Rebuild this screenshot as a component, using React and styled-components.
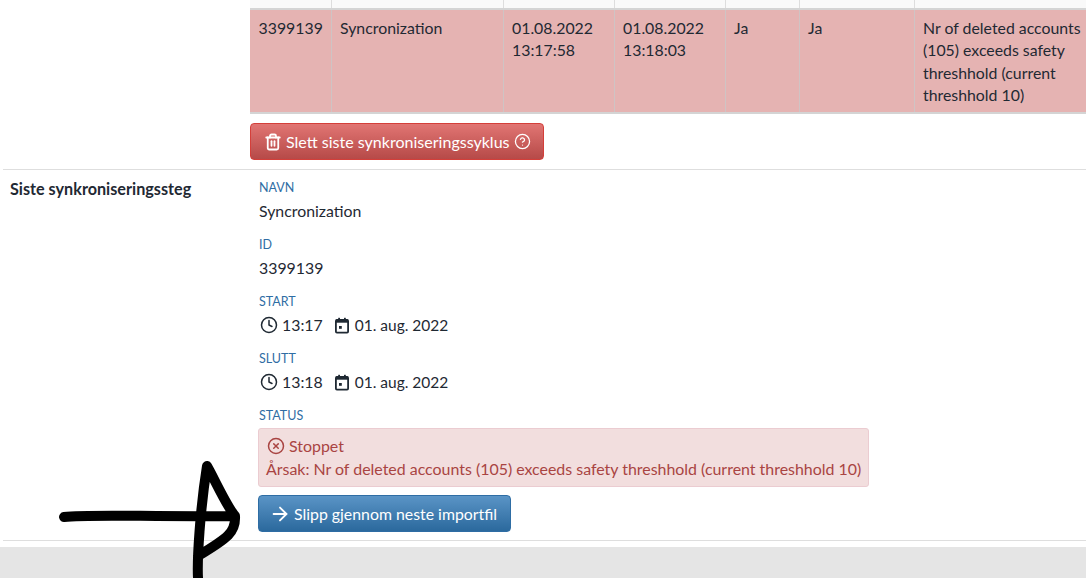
import React from "react";
import styled, { createGlobalStyle } from "styled-components";
import { Trash2, CircleHelp, Clock, CircleX, ArrowRight } from "lucide-react";

const GlobalStyle = createGlobalStyle`
  html, body {
    margin: 0;
    padding: 0;
    background: #fff;
  }
  body {
    font-family: Lato, "Open Sans", sans-serif;
    font-size: 15.85px;
    line-height: 22px;
    color: #1f2933;
    overflow: hidden;
  }
`;

const Page = styled.div`
  position: relative;
  width: 1086px;
  height: 578px;
  overflow: hidden;
  display: flex;
  flex-direction: column;
`;

const Main = styled.div`
  padding-left: 3px;
`;

const TopSection = styled.section`
  padding-left: 247px;
  height: 169px;
  box-sizing: border-box;
`;

const StepSection = styled.section`
  display: grid;
  grid-template-columns: 255px 1fr;
  border-top: 1px solid #dedede;
  border-bottom: 1px solid #dedede;
  height: 372px;
  box-sizing: border-box;
`;

const SectionTitle = styled.h3`
  margin: 8px 0 0 7px;
  font-size: 16.2px;
  line-height: 22px;
  font-weight: 700;
`;

const Table = styled.table`
  border-collapse: collapse;
  table-layout: fixed;
  width: 836px;
`;

const HeadCell = styled.th`
  height: 8px;
  padding: 0;
  background: #f9f9f9;
  border-right: 1px solid #dddddd;
  border-bottom: 2px solid #d4d4d4;
  &:last-child {
    border-right: 0;
  }
`;

const Cell = styled.td`
  height: 104px;
  box-sizing: border-box;
  padding: 7px 4px 5px 8.5px;
  line-height: 22.4px;
  vertical-align: top;
  background: #e5b3b2;
  border-right: 1px solid #cfc4c4;
  border-bottom: 2px solid #d4d4d4;
  &:last-child {
    border-right: 0;
  }
`;

const Button = styled.button`
  display: inline-flex;
  align-items: center;
  height: 37px;
  box-sizing: border-box;
  border-radius: 4px;
  border: 1px solid ${(p) => p.$border};
  background: linear-gradient(${(p) => p.$from}, ${(p) => p.$to});
  color: #fff;
  font: inherit;
  white-space: nowrap;
  cursor: pointer;
`;

const DeleteButton = styled(Button)`
  margin-top: 9px;
  padding: 0 12px 0 13px;
  gap: 4px;
  font-size: 16.05px;
`;

const ImportButton = styled(Button)`
  margin-top: 8px;
  padding: 0 13px 0 10px;
  gap: 3px;
`;

const Details = styled.div`
  padding: 7px 217px 0 0;
`;

const Field = styled.div`
  margin-bottom: 11px;
`;

const Label = styled.div`
  padding-left: 1px;
  font-size: 12.5px;
  line-height: 22px;
  color: #2f6da4;
  text-transform: uppercase;
`;

const Value = styled.div`
  display: flex;
  align-items: center;
  height: 24px;
  padding-left: 1px;
`;

const TimePart = styled.span`
  display: inline-flex;
  align-items: center;
  gap: 4px;
  margin-right: 11px;
`;

const DatePart = styled(TimePart)`
  gap: 5px;
  font-size: 15.5px;
`;

const Alert = styled.div`
  box-sizing: border-box;
  width: 611px;
  height: 59px;
  margin-top: 1px;
  padding: 6px 6px 0 7px;
  background: #f2dede;
  border: 1px solid #ebccd1;
  border-radius: 3px;
  color: #a94442;
  font-size: 15.93px;
  white-space: nowrap;
`;

const AlertTitle = styled.div`
  display: flex;
  align-items: center;
  gap: 4px;
  padding-left: 1px;
  margin-bottom: 1px;
`;

const Footer = styled.footer`
  margin-top: 6px;
  flex: 1;
  background: #e5e5e5;
`;

const Scribble = styled.svg`
  position: absolute;
  left: 0;
  top: 440px;
  pointer-events: none;
`;

const CalendarIcon = () => (
  <svg width="16" height="17" viewBox="0 0 16 17" fill="none">
    <rect x="1.9" y="3" width="12.2" height="12.6" rx="1" stroke="#1f2933" strokeWidth="1.8" />
    <rect x="2" y="2.5" width="12" height="3.2" fill="#1f2933" />
    <rect x="4.2" y="0.8" width="1.8" height="3" fill="#1f2933" />
    <rect x="10" y="0.8" width="1.8" height="3" fill="#1f2933" />
    <rect x="5" y="9" width="2.8" height="2.8" fill="#1f2933" />
  </svg>
);

const columns = [81, 172, 111, 111, 74, 115, 172];

const row = [
  "3399139",
  "Syncronization",
  <>01.08.2022<br />13:17:58</>,
  <>01.08.2022<br />13:18:03</>,
  "Ja",
  "Ja",
  "Nr of deleted accounts (105) exceeds safety threshhold (current threshhold 10)",
];

const TimeValue = ({ time }) => (
  <Value>
    <TimePart>
      <Clock size={18} strokeWidth={2} style={{ marginLeft: 1 }} />
      {time}
    </TimePart>
    <DatePart>
      <CalendarIcon />
      01. aug. 2022
    </DatePart>
  </Value>
);

export default function App() {
  return (
    <Page>
      <GlobalStyle />
      <Main>
        <TopSection>
          <Table>
            <colgroup>
              {columns.map((w, i) => (
                <col key={i} style={{ width: w }} />
              ))}
            </colgroup>
            <thead>
              <tr>
                {columns.map((_, i) => (
                  <HeadCell key={i} />
                ))}
              </tr>
            </thead>
            <tbody>
              <tr>
                {row.map((c, i) => (
                  <Cell key={i}>{c}</Cell>
                ))}
              </tr>
            </tbody>
          </Table>
          <DeleteButton $from="#e17573" $to="#b64a48" $border="#d43f3a">
            <Trash2 size={18} strokeWidth={2.4} />
            Slett siste synkroniseringssyklus
            <CircleHelp size={17} strokeWidth={1.8} />
          </DeleteButton>
        </TopSection>
        <StepSection>
          <SectionTitle>Siste synkroniseringssteg</SectionTitle>
          <Details>
            <Field>
              <Label>Navn</Label>
              <Value>Syncronization</Value>
            </Field>
            <Field>
              <Label>Id</Label>
              <Value>3399139</Value>
            </Field>
            <Field>
              <Label>Start</Label>
              <TimeValue time="13:17" />
            </Field>
            <Field>
              <Label>Slutt</Label>
              <TimeValue time="13:18" />
            </Field>
            <Label>Status</Label>
            <Alert>
              <AlertTitle>
                <CircleX size={18} strokeWidth={2} />
                Stoppet
              </AlertTitle>
              Årsak: Nr of deleted accounts (105) exceeds safety threshhold (current threshhold 10)
            </Alert>
            <ImportButton $from="#5a94c6" $to="#2b699d" $border="#2e6da4">
              <ArrowRight size={22} strokeWidth={2} />
              Slipp gjennom neste importfil
            </ImportButton>
          </Details>
        </StepSection>
      </Main>
      <Footer />
      <Scribble width="260" height="138" viewBox="0 440 260 138" fill="none">
        <path
          d="M64 517 C90 514 150 517 235 516 M198 578 C197 560 200 510 207 466 C214 478 226 505 235 516 C236 532 228 538 198 556"
          stroke="#000"
          strokeWidth="10"
          strokeLinecap="round"
          strokeLinejoin="round"
        />
      </Scribble>
    </Page>
  );
}
